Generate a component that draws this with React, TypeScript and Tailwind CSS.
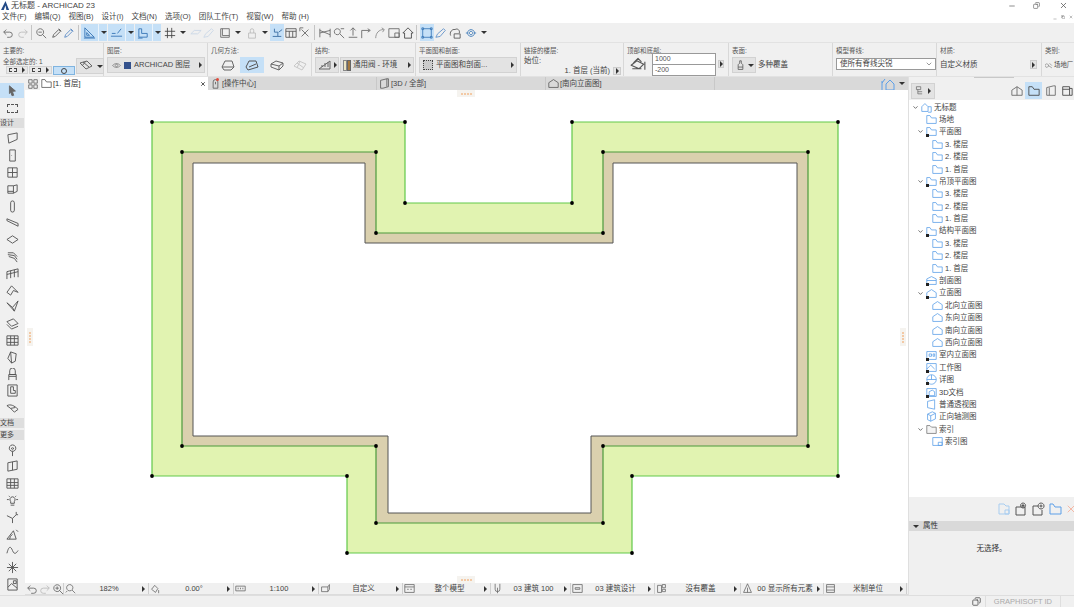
import React from "react";
import { ChevronDown, X, Minus, Copy } from "lucide-react";

const G = "#666";
const B = "#5c9fe8";

// small stroke icon on a 14 box
const Ico = ({ d, c = G, fill = "none", cls = "w-[14px] h-[14px]" }: { d: string; c?: string; fill?: string; cls?: string }) => (
  <svg viewBox="0 0 14 14" className={cls + " shrink-0"} fill={fill} stroke={c} strokeWidth="1" strokeLinejoin="round">
    <path d={d} />
  </svg>
);

const Arrow = ({ cls = "" }: { cls?: string }) => (
  <span className={"w-0 h-0 shrink-0 border-y-[3px] border-y-transparent border-l-[3px] border-l-[#333] " + cls} />
);
const Down = ({ cls = "" }: { cls?: string }) => (
  <span className={"w-0 h-0 shrink-0 border-x-[3px] border-x-transparent border-t-[3px] border-t-[#333] " + cls} />
);
const Sep = ({ cls = "" }: { cls?: string }) => <span className={"w-px h-[15px] bg-[#c4c4c4] shrink-0 " + cls} />;

const menus = ["文件(F)", "编辑(Q)", "视图(B)", "设计(I)", "文档(N)", "选项(O)", "团队工作(T)", "视窗(W)", "帮助 (H)"];

const P = {
  undo: "M2 6 L5 3 M2 6 L5 9 M2 6 H9 a3 3 0 0 1 0 6 H6",
  redo: "M12 6 L9 3 M12 6 L9 9 M12 6 H5 a3 3 0 0 0 0 6 H8",
  find: "M6 2 a4 4 0 1 0 .1 0 M9 9 L13 13 M4 6 H8",
  drop: "M2 12 L3 9 L9 3 L11 5 L5 11 Z M9 2 L12 5",
  ruler: "M2 12 V2 L12 12 Z M4 10 V7 L7 10 Z M1 13 H13",
  snap: "M1 11 H13 M2 8 L6 8 M8 8 L12 3",
  plan: "M2 12 V3 H5 V8 H11 V12 Z M1 13 H6",
  grid: "M4 1 V13 M9 1 V13 M1 5 H13 M1 10 H13",
  slab: "M1 8 L5 4 H13 L9 8 Z",
  square: "M2 2 H12 V12 H2 Z M4 2 V10 H12",
  lock: "M3 7 H11 V13 H3 Z M5 7 V4 a2 2 0 0 1 4 0 V7",
  pick: "M2 11 H8 V6 H4 V2 M8 11 L12 11 M9 6 L13 3",
  tbl: "M1 2 H13 V12 H1 Z M1 5 H13 M5 5 V12 M9 5 V12",
  cross: "M3 3 L11 11 M11 3 L3 11 M5 1 H1 V5",
  cut: "M1 2 V12 M13 2 V12 M1 7 L13 4 M1 4 L13 9",
  mag: "M5 2 a3.5 3.5 0 1 0 .1 0 M8 8 L13 13 M9 2 H13",
  up: "M7 1 V10 M4 4 L7 1 L10 4 M2 12 H12",
  corner: "M2 13 V4 H11 M9 2 L12 4 L9 6",
  arc: "M2 13 C2 7 6 3 11 3 M9 1 L12 3 L10 6",
  box: "M1 2 H13 V12 H1 Z M8 7 H13 V12 H8 Z",
  home: "M7 1 L13 7 H11 V13 H3 V7 H1 Z",
  snapOn: "M2 2 H12 V12 H2 Z M1 1 H3 V3 H1 Z M11 1 H13 V3 H11 Z M1 11 H3 V13 H1 Z M11 11 H13 V13 H11 Z",
  pen: "M1 12 L3 8 L10 2 L12 4 L6 11 Z",
  cloud: "M2 10 C0 6 4 2 7 3 C10 1 13 4 12 7 M6 8 H13 V13 H6 Z",
  target: "M7 3 a4 4 0 1 0 .1 0 M7 5 a2 2 0 1 0 .1 0 M1 7 H3 M11 7 H13",
};

const TB = ({ d, c = G, on = false, cls = "" }: { d: string; c?: string; on?: boolean; cls?: string }) => (
  <span className={"h-[17px] flex items-center justify-center shrink-0 " + (on ? "bg-[#c5e0f7] " : "") + cls}>
    <Ico d={d} c={c} cls="w-[12px] h-[12px]" />
  </span>
);

const SplitGroup = ({ d, cls = "" }: { d: string; cls?: string }) => (
  <span className={"flex h-[17px] bg-[#c5e0f7] w-[26px] shrink-0 items-center " + cls}>
    <span className="w-[17px] flex justify-center">
      <Ico d={d} c="#3a78b8" cls="w-[13px] h-[13px]" />
    </span>
    <span className="w-px h-[17px] bg-[#eaf3fb]" />
    <Down cls="ml-[2px]" />
  </span>
);

const Toolbar = () => (
  <div className="h-[19px] bg-[#f0f0f0] flex items-center pl-px shrink-0">
    <TB d={P.undo} cls="w-[14px]" />
    <TB d={P.redo} c="#bbb" cls="w-[15px]" />
    <Sep cls="ml-px" />
    <TB d={P.find} cls="w-[18px]" />
    <TB d={P.drop} c="#555" cls="w-[13px]" />
    <TB d={P.drop} c="#5588c4" cls="w-[12px]" />
    <Sep cls="ml-[3px] mr-[2px]" />
    <SplitGroup d={P.ruler} cls="mr-px" />
    <SplitGroup d={P.snap} cls="mr-px" />
    <SplitGroup d={P.plan} />
    <TB d={P.grid} c="#444" cls="w-[14px] ml-[2px]" />
    <Down cls="ml-[3px]" />
    <TB d={P.slab} c="#c9d6e6" cls="w-[14px] ml-[3px]" />
    <TB d={P.pen} c="#c9d6e6" cls="w-[12px]" />
    <TB d={P.square} cls="w-[14px] ml-[3px]" />
    <Down cls="ml-[3px]" />
    <TB d={P.lock} c="#bbb" cls="w-[14px] ml-[4px]" />
    <Down cls="ml-[3px]" />
    <TB d={P.pick} c="#33689f" on cls="w-[14px] ml-[2px]" />
    <TB d={P.tbl} c="#555" cls="w-[14px]" />
    <TB d={P.cross} cls="w-[14px]" />
    <Sep cls="ml-[2px]" />
    <TB d={P.cut} cls="w-[14px] ml-[3px]" />
    <TB d={P.mag} cls="w-[14px]" />
    <TB d={P.up} cls="w-[13px]" />
    <TB d={P.corner} cls="w-[14px]" />
    <TB d={P.arc} c="#888" cls="w-[14px]" />
    <TB d={P.box} cls="w-[14px]" />
    <TB d={P.home} c="#444" cls="w-[14px]" />
    <Sep cls="ml-px" />
    <TB d={P.snapOn} c="#3a78b8" on cls="w-[14px] ml-[3px]" />
    <TB d={P.pen} c="#5c8fc8" cls="w-[14px]" />
    <TB d={P.cloud} c="#555" cls="w-[14px]" />
    <TB d={P.target} c="#3a78b8" cls="w-[14px] ml-[2px]" />
    <Down cls="ml-[3px]" />
  </div>
);

const Lbl = ({ t }: { t: string }) => <div className="text-[6.5px] leading-[8px] text-[#555] pt-[1px] whitespace-nowrap">{t}</div>;

const GreyBtn = ({ children, cls = "" }: { children: React.ReactNode; cls?: string }) => (
  <div className={"h-[16px] bg-[#e3e3e3] border border-[#d2d2d2] flex items-center shrink-0 " + cls}>{children}</div>
);

const InfoBox = () => (
  <div className="h-[35px] bg-[#f0f0f0] flex border-y border-[#e2e2e2] shrink-0 overflow-hidden">
    <div className="w-[104px] shrink-0 border-r border-[#d8d8d8] pl-[3px] pt-[3px]">
      <Lbl t="主要的:" />
      <div className="flex">
        <div>
          <div className="text-[6.5px] leading-[8px] text-[#555] mt-[3px]">全部选定的: 1</div>
          <div className="flex gap-px">
            <div className="w-[22px] h-[8px] bg-[#e8e8e8] border border-[#d2d2d2] flex items-center justify-between px-[2px] ml-[3px]"><span className="w-[8px] h-[4px] border border-dashed border-[#444]" /><Arrow /></div>
            <div className="w-[23px] h-[8px] bg-[#e8e8e8] border border-[#d2d2d2] flex items-center justify-between px-[2px]"><span className="w-[9px] h-[4px] border border-dashed border-[#444]" /><Arrow /></div>
            <div className="w-[22px] h-[9px] bg-[#c5e0f7] border border-[#7fb4e0] flex items-center justify-center"><span className="w-[6px] h-[6px] rounded-full border border-[#444]" /></div>
          </div>
        </div>
        <div className="w-[28px] h-[16px] bg-[#e3e3e3] border border-[#d2d2d2] ml-px mt-[3px] flex items-center">
          <Ico d="M1 4 L8 2 L13 7 L7 10 Z M4 3 L10 8 M7 2 L3 7" cls="w-[18px] h-[14px]" />
          <Down cls="ml-[2px]" />
        </div>
      </div>
    </div>
    <div className="w-[104px] shrink-0 border-r border-[#d8d8d8] pl-[3px] pt-[3px]">
      <Lbl t="图层:" />
      <GreyBtn cls="w-[98px] mt-[2px] pl-[4px] pr-[2px] text-[7.5px] text-[#444]">
        <Ico d="M1 7 C4 3 10 3 13 7 C10 11 4 11 1 7 Z M7 5 a2 2 0 1 0 .1 0" cls="w-[9px] h-[9px]" />
        <span className="w-[7px] h-[7px] bg-[#33518c] ml-[3px] mr-[3px]" />
        <span className="flex-1 whitespace-nowrap">ARCHICAD 图层</span>
        <Arrow />
      </GreyBtn>
    </div>
    <div className="w-[104px] shrink-0 border-r border-[#d8d8d8] pl-[3px] pt-[3px]">
      <Lbl t="几何方法:" />
      <div className="flex items-center mt-[2px] ml-[5px]">
        <div className="w-[25px] h-[16px] flex items-center justify-center"><Ico d="M1 9 L4 3 H11 L13 9 L10 12 H3 Z M1 9 H13" /></div>
        <div className="w-[25px] h-[16px] flex items-center justify-center bg-[#c5e0f7]"><Ico d="M1 9 L4 3 H11 L13 9 L3 12 Z M4 9 L11 6" c="#555" /></div>
        <div className="w-[25px] h-[16px] flex items-center justify-center"><Ico d="M1 6 L6 3 L13 5 L9 8 Z M1 6 V9 L9 12 V8 M13 5 V8 L9 12" /></div>
        <div className="w-[23px] h-[16px] flex items-center justify-center"><Ico d="M1 8 L6 3 L13 6 L9 12 Z M4 5 L11 10 M7 3 L4 10" c="#c8c8c8" /></div>
      </div>
    </div>
    <div className="w-[104px] shrink-0 border-r border-[#d8d8d8] pl-[3px] pt-[3px]">
      <Lbl t="结构:" />
      <div className="flex mt-[2px] gap-px">
        <GreyBtn cls="w-[24px] justify-center gap-[2px]">
          <Ico d="M1 11 L12 3 V11 Z M4 9 V7 M7 9 V5 M10 9 V4" />
          <Arrow />
        </GreyBtn>
        <GreyBtn cls="w-[74px] pr-[2px] text-[7.5px] text-[#444]">
          <span className="w-[4px] h-[11px] bg-[#ece5c4] border border-[#888] ml-[2px]" />
          <span className="w-[4px] h-[11px] bg-[#a5793f] border border-[#666] mr-[2px]" />
          <span className="flex-1 whitespace-nowrap">通用阀 - 环境</span>
          <Arrow />
        </GreyBtn>
      </div>
    </div>
    <div className="w-[105px] shrink-0 border-r border-[#d8d8d8] pl-[3px] pt-[3px]">
      <Lbl t="平面图和剖面:" />
      <GreyBtn cls="w-[98px] mt-[2px] pl-[3px] pr-[2px] text-[7.5px] text-[#444]">
        <span className="w-[10px] h-[10px] border border-dotted border-[#444] mr-[3px] bg-[#ccc]" />
        <span className="flex-1 whitespace-nowrap">平面图和剖面...</span>
        <Arrow />
      </GreyBtn>
    </div>
    <div className="w-[103px] shrink-0 border-r border-[#d8d8d8] pl-[3px] pt-[3px] text-[7.5px] text-[#444]">
      <Lbl t="链接的楼层:" />
      <div className="leading-[10px] mt-px">始位:</div>
      <div className="flex items-center justify-end pr-[2px] h-[10px]">
        <span className="whitespace-nowrap mr-[3px] leading-[10px]">1. 首层 (当前)</span>
        <span className="w-[8px] h-[8px] bg-[#e3e3e3] border border-[#ccc] flex items-center justify-center"><Arrow /></span>
      </div>
    </div>
    <div className="w-[105px] shrink-0 border-r border-[#d8d8d8] pl-[3px] pt-[3px] flex">
      <div className="w-[24px]">
        <Lbl t="顶部和底部:" />
        <Ico d="M1 9 L6 5 L12 8 L8 12 Z M3 7 L7 3 L10 6 M2 12 H10 M13 6 V13" c="#555" cls="w-[22px] h-[16px]" />
      </div>
      <div className="mt-[7px] ml-[1px] flex flex-col text-[7px] text-[#555]">
        <div className="w-[64px] h-[12px] bg-white border border-[#999] pl-[2px] leading-[10px]">1000</div>
        <div className="w-[64px] h-[11px] bg-white border border-[#999] border-t-0 pl-[2px] leading-[10px]">-200</div>
      </div>
      <span className="w-[6px] h-[8px] bg-[#e3e3e3] border border-[#ccc] ml-[2px] mt-[14px] flex items-center justify-center"><Arrow /></span>
    </div>
    <div className="w-[104px] shrink-0 border-r border-[#d8d8d8] pl-[3px] pt-[3px]">
      <Lbl t="表面:" />
      <div className="flex items-center mt-[2px] text-[7.5px] text-[#444]">
        <GreyBtn cls="w-[24px] justify-center gap-[2px]">
          <Ico d="M6 1 H8 V4 L10 6 V12 H4 V6 L6 4 Z M4 9 H10" c="#555" cls="w-[11px] h-[11px]" />
          <Down />
        </GreyBtn>
        <span className="ml-[2px] whitespace-nowrap">多种覆盖</span>
      </div>
    </div>
    <div className="w-[104px] shrink-0 border-r border-[#d8d8d8] pl-[3px] pt-[3px]">
      <Lbl t="模型脊线:" />
      <div className="w-[100px] h-[12px] bg-white border border-[#999] mt-[3px] flex items-center justify-between pl-[3px] pr-[2px] text-[7.5px] text-[#444]">
        <span className="whitespace-nowrap">使所有脊线尖锐</span>
        <ChevronDown className="w-[8px] h-[8px] text-[#666]" />
      </div>
    </div>
    <div className="w-[105px] shrink-0 border-r border-[#d8d8d8] pl-[3px] pt-[3px] text-[7.5px] text-[#444]">
      <Lbl t="材质:" />
      <div className="flex items-center justify-between pr-[4px] mt-[4px]">
        <span className="whitespace-nowrap">自定义材质</span>
        <span className="w-[7px] h-[9px] bg-[#e3e3e3] border border-[#ccc] flex items-center justify-center"><Arrow /></span>
      </div>
    </div>
    <div className="flex-1 pl-[3px] pt-[3px] text-[6.4px] text-[#444] overflow-hidden">
      <Lbl t="类别:" />
      <div className="flex items-center mt-[4px] gap-px whitespace-nowrap h-[11px]">
        <Ico d="M3 5 a3 3 0 1 0 .1 0 M6 8 L12 12 M8 4 L12 8" cls="w-[8px] h-[8px]" />
        <span>场地厂</span>
      </div>
    </div>
  </div>
);

const tools1 = [
  "M2 3 L12 1 V8 L3 12 Z",
  "M4 1 H10 V13 H4 Z M6 7 H6.5",
  "M2 2 H12 V12 H2 Z M7 2 V12 M2 7 H12",
  "M2 3 H8 L12 2 V9 L8 11 H2 Z M8 3 V11 M2 9 H8",
  "M5 3 a2 2 0 0 1 4 0 V11 a2 2 0 0 1 -4 0 Z",
  "M1 3 L13 8 V11 L1 5 Z",
  "M1 7 L7 3 L13 7 L7 11 Z",
  "M2 3 H8 L12 7 M2 5 L9 6 L12 10 M3 7 L9 9 L12 13",
  "M1 13 V5 L13 2 V11 M5 4 V12 M9 3 V11 M1 8 L13 5",
  "M1 9 L6 2 L13 9 L8 7 L5 12 Z",
  "M1 3 L7 8 L13 1 L9 12 Z M7 8 L9 12",
  "M1 5 L8 2 L13 7 L6 10 Z M1 8 L6 13 L13 10",
  "M1 2 H13 V12 H1 Z M1 5 H13 M1 9 H13 M5 2 V12 M9 2 V12",
  "M5 1 L11 3 L10 11 L6 13 L2 8 Z M5 1 L6 13",
  "M4 7 V3 a3 3 0 0 1 6 0 V7 H4 M3 7 H11 V9 H3 Z M3 9 V13 M11 9 V13",
  "M2 1 H12 V13 H2 Z M5 3 H8 V7 H10 V10 H5 Z",
  "M1 5 C5 3 9 5 13 9 L9 12 L5 8 Z M5 8 L10 7",
];
const tools2 = [
  "M7 1 a3.5 3.5 0 1 0 .1 0 M7 8 V13 M7 4 a1 1 0 1 0 .1 0",
  "M2 3 L12 1 V10 L2 12 Z M7 2 V11",
  "M1 2 L13 2 V12 L1 12 Z M1 6 H13 M1 9 H13 M5 2 V12 M9 2 V12",
  "M7 3 a3 3 0 0 1 2 5 V10 H5 V8 a3 3 0 0 1 2 -5 M1 6 H3 M11 6 H13 M3 2 L4 3 M11 2 L10 3 M5 12 H9",
  "M7 13 V8 L1 5 M7 8 L11 4 M11 1 V4 H13",
  "M1 12 L8 3 L11 12 Z M4 12 a5 5 0 0 1 3 -5 M11 2 L13 4",
  "M1 10 C3 2 5 2 7 7 C9 12 11 10 13 7",
  "M7 1 V13 M1 7 H13 M3 3 L11 11 M11 3 L3 11",
  "M2 1 H12 V13 H2 Z M2 10 L6 6 L12 11 M8 3 H11 V6 H8 Z",
];

const ToolRows = ({ list }: { list: string[] }) => (
  <>
    {list.map((d, i) => (
      <div key={i} className="h-[16.8px] flex items-center justify-center shrink-0">
        <Ico d={d} c="#555" cls="w-[13px] h-[13px]" />
      </div>
    ))}
  </>
);

const Toolbox = () => (
  <div className="w-[25px] bg-[#f0f0f0] shrink-0 flex flex-col pt-[6px] pr-px">
    <div className="h-[15px] bg-[#c5e0f7] flex items-center justify-center shrink-0">
      <Ico d="M4 1 L11 7 L7.5 7.5 L9 12 L7 12.5 L5.5 8.5 L4 10 Z" fill="#666" c="#666" cls="w-[12px] h-[12px]" />
    </div>
    <div className="h-[20px] flex items-center justify-center shrink-0">
      <span className="w-[11px] h-[9px] border border-dashed border-[#555]" />
    </div>
    <div className="h-[10px] bg-[#dedede] text-[7px] leading-[10px] text-[#444] mb-[2.6px] shrink-0">设计</div>
    <ToolRows list={tools1} />
    <div className="h-[10px] bg-[#dedede] text-[7px] leading-[10px] text-[#444] mt-[2px] shrink-0">文档</div>
    <div className="h-[10px] bg-[#dedede] text-[7px] leading-[10px] text-[#444] mt-[2px] mb-[1.6px] shrink-0">更多</div>
    <ToolRows list={tools2} />
  </div>
);

const Tab = ({ d, t, badge }: { d: string; t: string; badge?: boolean }) => (
  <div className="w-[169px] h-full shrink-0 flex items-center border-r border-[#c8c8c8] pl-[2px] gap-px text-[7.5px] text-[#444] relative">
    <Ico d={d} c="#555" cls="w-[11px] h-[11px]" />
    {badge && <span className="absolute left-[8px] top-px w-[3px] h-[3px] rounded-full bg-[#e0483a]" />}
    <span>{t}</span>
  </div>
);

const Tabs = () => (
  <div className="h-[13px] flex shrink-0 items-stretch bg-[#d9d9d9]">
    <div className="w-[183px] bg-white flex items-center shrink-0 text-[7.5px] text-[#333] pr-[2px]">
      <span className="h-full w-[15px] bg-[#f0f0f0] flex items-center justify-center">
        <Ico d="M2 2 H6 V6 H2 Z M8 2 H12 V6 H8 Z M2 8 H6 V12 H2 Z M8 8 H12 V12 H8 Z" cls="w-[12px] h-[12px]" />
      </span>
      <Ico d="M1 12 V2 H5 L7 5 H13 V12 Z" c="#555" cls="w-[11px] h-[11px] ml-px" />
      <span className="flex-1 ml-px">[1. 首层]</span>
      <X className="w-[6px] h-[6px] text-[#222]" strokeWidth={3} />
    </div>
    <Tab d="M4 5 a3 3 0 0 1 6 0 V13 H4 Z M7 5 V8" t="[操作中心]" badge />
    <Tab d="M2 3 L10 1 H12 V11 L5 13 H2 Z M10 1 V11" t="[3D / 全部]" />
    <Tab d="M1 12 V6 L7 2 L13 6 V12 Z" t="[南向立面图]" />
    <div className="flex-1 flex items-center justify-end pr-[3px] gap-[4px]">
      <Ico d="M1 13 V4 M1 6 L4 2 M5 13 V7 L9 3 L13 7 V13 Z" c={B} />
      <Down />
    </div>
  </div>
);

const greenPts = "152,122 405,122 405,203 572,203 572,122 838,122 838,476 632,476 632,553 347,553 347,476 152,476";
const wallPts = "182,152 376,152 376,233 603,233 603,152 808,152 808,446 603,446 603,523 376,523 376,446 182,446";
const roomPts = "193,163 365,163 365,243 613,243 613,163 797,163 797,436 591,436 591,513 388,513 388,436 193,436";
const dots = (greenPts + " " + wallPts).split(" ").map((p) => p.split(",").map(Number));

const Plan = () => (
  <svg viewBox="25 90 883 493" className="w-full h-full block">
    <polygon points={greenPts} fill="#e1f3b1" stroke="#62c94a" strokeWidth="1.2" />
    <polygon points={wallPts} fill="#dad0ae" stroke="#4d9a3c" strokeWidth="1.2" />
    <polygon points={roomPts} fill="#fff" stroke="#555" strokeWidth="1" />
    {dots.map(([x, y], i) => (
      <circle key={i} cx={x} cy={y} r="1.9" fill="#000" />
    ))}
  </svg>
);

const Handle = ({ cls, v }: { cls: string; v?: boolean }) => (
  <div className={"absolute bg-[#f5f3ef] flex items-center justify-center gap-px " + (v ? "flex-col w-[6px] h-[18px] " : "w-[18px] h-[7px] ") + cls}>
    {[0, 1, 2, 3].map((i) => (
      <span key={i} className="w-[2px] h-[2px] bg-[#f3c9a5]" />
    ))}
  </div>
);

const StatusCell = ({ d, t, w }: { d: string; t: string; w: string }) => (
  <div className={"h-full flex items-center shrink-0 border-r border-[#cfcfcf] pl-[1px] pr-[3px] text-[7.5px] text-[#444] " + w}>
    <Ico d={d} cls="w-[11px] h-[11px]" />
    <span className="flex-1 text-center whitespace-nowrap">{t}</span>
    <Arrow />
  </div>
);

const StatusBar = () => (
  <div className="h-[12px] bg-[#f0f0f0] border-b border-[#dcdcdc] flex items-center shrink-0">
    <div className="w-[39px] flex items-center h-full border-r border-[#cfcfcf] shrink-0">
      <Ico d={P.undo} cls="w-[12px] h-[12px] ml-px" />
      <Ico d={P.redo} c="#bbb" cls="w-[12px] h-[12px] ml-px" />
      <Ico d="M6 2 a4 4 0 1 0 .1 0 M9 9 L13 13 M4 6 H8 M6 4 V8" cls="w-[12px] h-[12px] ml-px" />
    </div>
    <StatusCell w="w-[85px]" d="M6 2 a4 4 0 1 0 .1 0 M9 9 L13 13 M1 12 L3 10" t="182%" />
    <StatusCell w="w-[85px]" d="M2 8 L6 3 L10 7 L7 12 Z M11 9 V13" t="0.00°" />
    <StatusCell w="w-[85px]" d="M1 4 H13 V10 H1 Z M4 6 V8 M7 6 V8 M10 6 V8" t="1:100" />
    <StatusCell w="w-[84px]" d="M2 5 H10 L12 2 M2 5 V11 H10 V5 M10 11 L12 8 V2" t="自定义" />
    <StatusCell w="w-[88px]" d="M1 2 H13 V12 H1 Z M1 5 H13 M4 8 H6 M8 8 H10" t="整个模型" />
    <StatusCell w="w-[80px]" d="M4 1 V8 a3 3 0 0 0 6 0 V1 M7 6 V13" t="03 建筑 100" />
    <StatusCell w="w-[84px]" d="M1 2 H13 V12 H1 Z M4 6 H10 V8 H4 Z" t="03 建筑设计" />
    <StatusCell w="w-[86px]" d="M2 3 H7 V12 H2 Z M8 2 H12 V6 H8 Z M8 8 H12 V11 H8 Z" t="没有覆盖" />
    <StatusCell w="w-[83px]" d="M7 1 L12 12 H2 Z M7 6 V12" t="00 显示所有元素" />
    <StatusCell w="w-[83px]" d="M2 2 H12 V12 H2 Z M2 5 H12 M2 9 H12" t="米制单位" />
  </div>
);

type Kind = "house" | "floor" | "floorS" | "elev" | "elevS" | "sec" | "room" | "work" | "det" | "doc" | "persp" | "axo" | "idx" | "idxFolder";
type Row = { t: string; lv: 0 | 1 | 2; k: Kind; open?: boolean };

const rows: Row[] = [
  { t: "无标题", lv: 0, k: "house", open: true },
  { t: "场地", lv: 1, k: "floor" },
  { t: "平面图", lv: 1, k: "floorS", open: true },
  { t: "3. 楼层", lv: 2, k: "floor" },
  { t: "2. 楼层", lv: 2, k: "floor" },
  { t: "1. 首层", lv: 2, k: "floor" },
  { t: "吊顶平面图", lv: 1, k: "floorS", open: true },
  { t: "3. 楼层", lv: 2, k: "floor" },
  { t: "2. 楼层", lv: 2, k: "floor" },
  { t: "1. 首层", lv: 2, k: "floor" },
  { t: "结构平面图", lv: 1, k: "floorS", open: true },
  { t: "3. 楼层", lv: 2, k: "floor" },
  { t: "2. 楼层", lv: 2, k: "floor" },
  { t: "1. 首层", lv: 2, k: "floor" },
  { t: "剖面图", lv: 1, k: "sec" },
  { t: "立面图", lv: 1, k: "elevS", open: true },
  { t: "北向立面图", lv: 2, k: "elev" },
  { t: "东向立面图", lv: 2, k: "elev" },
  { t: "南向立面图", lv: 2, k: "elev" },
  { t: "西向立面图", lv: 2, k: "elev" },
  { t: "室内立面图", lv: 1, k: "room" },
  { t: "工作图", lv: 1, k: "work" },
  { t: "详图", lv: 1, k: "det" },
  { t: "3D文档", lv: 1, k: "doc" },
  { t: "普通透视图", lv: 1, k: "persp" },
  { t: "正向轴测图", lv: 1, k: "axo" },
  { t: "索引", lv: 1, k: "idxFolder", open: true },
  { t: "索引图", lv: 2, k: "idx" },
];

const shapes: Record<Kind, string> = {
  house: "M1 12 V6 L5 2 L9 6 V12 Z M9 6 H13 V13 H9",
  floor: "M1 12 V2 H5 L7 5 H13 V12 Z",
  floorS: "M1 12 V2 H5 L7 5 H13 V12 Z",
  elev: "M1 12 V6 L7 2 L13 6 V12 Z",
  elevS: "M1 12 V6 L7 2 L13 6 V12 Z",
  sec: "M1 12 V5 L7 2 L13 5 V12 Z M1 7 H13",
  room: "M1 2 H13 V12 H1 Z M4 5 H7 V8 H4 Z M9 5 H11 V8 H9 Z",
  work: "M1 2 H13 V12 H1 Z M1 9 L6 4 L11 9",
  det: "M7 1 a6 6 0 1 0 .1 0 M1 7 H13 M7 1 V7",
  doc: "M1 2 H13 V12 H1 Z M4 6 L8 4 L11 6 V11 H4 Z",
  persp: "M2 3 L11 1 V13 L2 11 Z",
  axo: "M2 4 L8 1 L12 3 V10 L6 13 L2 11 Z M2 4 L6 6 L12 3 M6 6 V13",
  idx: "M1 2 H13 V12 H1 Z M8 8 H13 V12 H8 Z",
  idxFolder: "M1 12 V2 H5 L7 4 H13 V12 Z",
};

const badged: Kind[] = ["floorS", "elevS", "sec", "room", "work", "det", "doc"];
const indent = ["pl-[1px]", "pl-[6px]", "pl-[12px]"];

const Tree = () => (
  <div className="flex-1 bg-white pt-px overflow-hidden">
    {rows.map((r, i) => (
      <div key={i} className={"h-[12.4px] flex items-center text-[7.5px] text-[#444] whitespace-nowrap " + indent[r.lv]}>
        <span className="w-[10px] flex justify-center shrink-0">
          {r.open && <ChevronDown className="w-[7px] h-[7px] text-[#444]" strokeWidth={2.5} />}
        </span>
        <span className="w-[12px] flex justify-center shrink-0 relative">
          <Ico d={shapes[r.k]} c={r.k === "idxFolder" ? "#777" : B} fill={r.k === "idxFolder" ? "#f4f4f4" : "#fff"} cls="w-[11px] h-[11px]" />
          {badged.includes(r.k) && <span className="absolute left-[1px] bottom-0 w-[3px] h-[3px] bg-[#222]" />}
        </span>
        <span className="ml-[2px]">{r.t}</span>
      </div>
    ))}
  </div>
);

const RightPanel = () => (
  <div className="w-[166px] shrink-0 flex flex-col bg-[#f0f0f0] border-l border-[#dfdfdf]">
    <div className="h-[23px] flex shrink-0 items-end pb-px relative">
      <div className="w-[24px] h-[16px] bg-[#e3e3e3] border border-[#d2d2d2] ml-[2px] flex items-center justify-center gap-[3px]">
        <Ico d="M2 1 H8 V5 H2 Z M4 5 V11 H10 M4 8 H10" cls="w-[10px] h-[10px]" />
        <Arrow />
      </div>
      <span className="absolute left-[65px] top-0 w-[40px] h-px bg-[#c8c8c8]" />
      <div className="ml-auto flex items-center">
        <span className="w-[17px] h-[17px] flex items-center justify-center"><Ico d="M1 12 V6 L7 2 L13 6 V12 Z M7 2 V12" cls="w-[12px] h-[12px]" /></span>
        <span className="w-[17px] h-[17px] flex items-center justify-center bg-[#c5e0f7]"><Ico d="M1 12 V2 H5 L7 5 H13 V12 Z" c="#444" cls="w-[12px] h-[12px]" /></span>
        <span className="w-[17px] h-[17px] flex items-center justify-center"><Ico d="M2 3 L10 1 H12 V12 H2 Z M5 3 V12" cls="w-[12px] h-[12px]" /></span>
        <span className="w-[15px] h-[17px] flex items-center justify-center"><Ico d="M2 2 H10 V12 H2 Z M10 4 H13 V12 H10 M2 5 H10" c="#444" cls="w-[12px] h-[12px]" /></span>
      </div>
    </div>
    <Tree />
    <div className="h-[24px] shrink-0 flex items-center justify-end gap-[3px] overflow-hidden">
      <Ico d="M2 2 H7 L9 4 H12 V12 H2 Z M8 8 H12 V12 H8 Z" c="#a8cdf0" />
      <Ico d="M2 5 H11 V13 H2 Z M9 1 a2.5 2.5 0 1 0 .1 0 M9 2 V5 M7.5 3.5 H10.5" c="#555" />
      <Ico d="M2 4 H7 M2 4 V13 H11 V8 M10 1 a3 3 0 1 0 .1 0 M10 2.5 V5.5 M8.5 4 H11.5" c="#555" />
      <Ico d="M2 12 V2 H5 L7 5 H13 V12 Z" c={B} />
      <X className="w-[12px] h-[12px] text-[#f5b8a5] -mr-[3px]" />
    </div>
    <div className="h-[10px] bg-[#d9d9d9] shrink-0 flex items-center pl-[4px] gap-[4px] text-[7.5px] text-[#333]">
      <Down />
      <span>属性</span>
    </div>
    <div className="h-[64px] shrink-0 flex justify-center pt-[12px] text-[7.5px] text-[#333] leading-[12px]">无选择。</div>
  </div>
);

const BottomBar = () => (
  <div className="h-[12px] bg-[#f0f0f0] border-t border-[#dedede] flex items-center justify-end shrink-0 pr-[13px]">
    <Copy className="w-[9px] h-[9px] text-[#444] mr-[4px] -scale-x-100" />
    <span className="border-l border-r border-[#dedede] h-full px-[8px] text-[7.5px] leading-[11px] text-[#aaa] whitespace-nowrap">GRAPHISOFT ID</span>
  </div>
);

export default function App() {
  return (
    <div className="w-[1074px] h-[607px] flex flex-col overflow-hidden bg-white font-['Liberation_Sans','Noto_Sans_CJK_SC',sans-serif] text-[#333] relative">
      <div className="h-[11px] flex items-center shrink-0 relative">
        <svg viewBox="0 0 10 10" className="w-[9px] h-[9px] ml-px shrink-0"><path d="M0 10 L5 0 L9 10 L6 10 L5 5 L3 10 Z" fill="#234a86" /></svg>
        <span className="ml-[1px] text-[8px] text-[#444] whitespace-nowrap">无标题 - ARCHICAD 23</span>
        <div className="ml-auto flex items-center text-[#555]">
          <Minus className="w-[8px] h-[8px] mr-[17px]" />
          <Copy className="w-[7px] h-[7px] mr-[19px] -scale-x-100" />
          <X className="w-[9px] h-[9px] mr-[6px]" />
        </div>
      </div>
      <div className="h-[12px] flex items-center shrink-0 pl-[2px] text-[7.5px] text-[#444] whitespace-nowrap">
        {menus.map((m, i) => (
          <span key={i} className="mr-[8px]">{m}</span>
        ))}
        <div className="ml-auto flex items-center gap-[4px] pr-px">
          <Minus className="w-[4px] h-[4px] mt-[3px]" />
          <Copy className="w-[4px] h-[4px]" />
          <X className="w-[4px] h-[4px]" />
        </div>
      </div>
      <Toolbar />
      <InfoBox />
      <div className="flex-1 flex min-h-0 relative">
        <Toolbox />
        <div className="flex-1 flex flex-col min-w-0 relative">
          <Tabs />
          <div className="flex-1 min-h-0 bg-white relative">
            <Plan />
            <Handle cls="left-[432px] top-0" />
            <Handle cls="left-[432px] bottom-0" />
            <Handle v cls="left-[2px] top-[238px]" />
            <Handle v cls="right-[2px] top-[238px]" />
          </div>
          <StatusBar />
        </div>
        <RightPanel />
      </div>
      <BottomBar />
    </div>
  );
}
